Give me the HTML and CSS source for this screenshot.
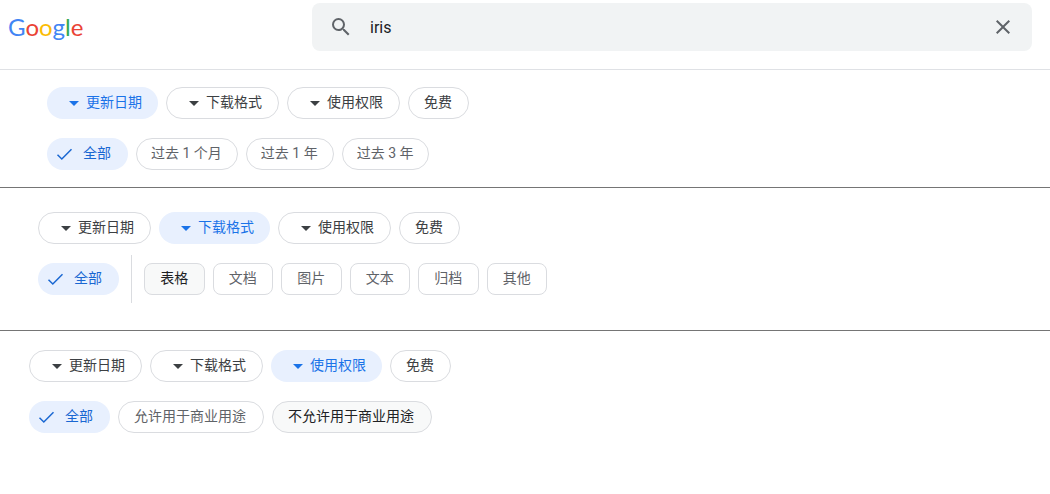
FILE: index.html
```html
<!DOCTYPE html>
<html lang="zh-CN">
<head>
<meta charset="utf-8">
<meta name="viewport" content="width=device-width, initial-scale=1">
<title>iris</title>
<link rel="stylesheet" href="styles.css">
</head>
<body>
<svg class="sprite" aria-hidden="true">
  <symbol id="arrow" viewBox="0 0 24 24"><path d="M7 10l5 5 5-5z"/></symbol>
  <symbol id="check" viewBox="0 0 18 18"><path d="M1.500 9.800l4.300 4.200L15.500 4.300" fill="none" stroke="currentColor" stroke-width="1.500"/></symbol>
</svg>
<header class="header">
  <a class="logo" href="#" aria-label="Google"><span class="blue">G</span><span class="red">o</span><span class="yellow">o</span><span class="blue">g</span><span class="green">l</span><span class="red">e</span></a>
  <form class="search" role="search">
    <button class="icon-button" type="button" aria-label="搜索"><svg viewBox="0 0 24 24"><path d="M15.500 14h-.790l-.280-.270A6.471 6.471 0 0 0 16 9.500 6.500 6.500 0 1 0 9.500 16c1.610 0 3.090-.590 4.230-1.570l.270.280v.790l5 4.990L20.490 19l-4.990-5zm-6 0C7.010 14 5 11.990 5 9.500S7.010 5 9.500 5 14 7.010 14 9.500 11.990 14 9.500 14z"/></svg></button>
    <input class="query" type="text" value="iris" aria-label="搜索数据集">
    <button class="icon-button" type="button" aria-label="清除"><svg viewBox="0 0 24 24"><path d="M19 6.410L17.590 5 12 10.590 6.410 5 5 6.410 10.590 12 5 17.590 6.410 19 12 13.410 17.590 19 19 17.590 13.410 12z"/></svg></button>
  </form>
</header>
<main>
  <section class="panel panel-date">
    <div class="chips">
      <button class="chip menu active"><svg><use href="#arrow"/></svg>更新日期</button>
      <button class="chip menu"><svg><use href="#arrow"/></svg>下载格式</button>
      <button class="chip menu"><svg><use href="#arrow"/></svg>使用权限</button>
      <button class="chip">免费</button>
    </div>
    <div class="chips options">
      <button class="chip all"><svg><use href="#check"/></svg>全部</button>
      <button class="chip option">过去 1 个月</button>
      <button class="chip option">过去 1 年</button>
      <button class="chip option">过去 3 年</button>
    </div>
  </section>
  <section class="panel panel-format">
    <div class="chips">
      <button class="chip menu"><svg><use href="#arrow"/></svg>更新日期</button>
      <button class="chip menu active"><svg><use href="#arrow"/></svg>下载格式</button>
      <button class="chip menu"><svg><use href="#arrow"/></svg>使用权限</button>
      <button class="chip">免费</button>
    </div>
    <div class="chips options">
      <button class="chip all"><svg><use href="#check"/></svg>全部</button>
      <div class="formats">
        <button class="chip option square hovered">表格</button>
        <button class="chip option square">文档</button>
        <button class="chip option square">图片</button>
        <button class="chip option square">文本</button>
        <button class="chip option square">归档</button>
        <button class="chip option square">其他</button>
      </div>
    </div>
  </section>
  <section class="panel panel-rights">
    <div class="chips">
      <button class="chip menu"><svg><use href="#arrow"/></svg>更新日期</button>
      <button class="chip menu"><svg><use href="#arrow"/></svg>下载格式</button>
      <button class="chip menu active"><svg><use href="#arrow"/></svg>使用权限</button>
      <button class="chip">免费</button>
    </div>
    <div class="chips options">
      <button class="chip all"><svg><use href="#check"/></svg>全部</button>
      <button class="chip option">允许用于商业用途</button>
      <button class="chip option hovered">不允许用于商业用途</button>
    </div>
  </section>
</main>
</body>
</html>
```
FILE: styles.css
```css
* { box-sizing: border-box; }
body {
  margin: 0;
  background: #fff;
  color: #3c4043;
  font-family: Roboto, "Noto Sans CJK SC", sans-serif;
  font-size: 14px;
}
button, input { font: inherit; color: inherit; }
.sprite { display: none; }

.header {
  display: grid;
  grid-template-columns: 304px 1fr;
  padding: 3px 18px 18px 8px;
  border-bottom: 1px solid #dfe1e5;
}
.logo {
  align-self: center;
  font: 24px/32px Lato, sans-serif;
  text-decoration: none;
}
.blue { color: #4285f4; }
.red { color: #ea4335; }
.yellow { color: #fbbc05; }
.green { color: #34a853; }

.search {
  display: flex;
  align-items: center;
  height: 48px;
  padding: 0 17px;
  border-radius: 8px;
  background: #f1f3f4;
}
.icon-button {
  width: 24px;
  height: 24px;
  padding: 0;
  border: 0;
  background: none;
  color: #5f6368;
}
.icon-button svg { display: block; width: 24px; height: 24px; fill: currentColor; }
.query {
  flex: 1;
  min-width: 0;
  padding: 0 17px;
  border: 0;
  outline: 0;
  background: none;
  color: #202124;
  font-family: Roboto, sans-serif;
  font-size: 16px;
}

.panel { border-bottom: 1px solid #757575; }
.panel-date { padding: 17px 47px; }
.panel-format { padding: 24px 38px 27px; }
.panel-rights { padding: 19px 29px; border-bottom: 0; }

.chips { display: flex; flex-wrap: wrap; gap: 8px; }
.options { margin-top: 19px; }
.chip {
  display: flex;
  align-items: center;
  height: 32px;
  padding: 0 16px 2px 15px;
  border: 1px solid #dadce0;
  border-radius: 16px;
  background: #fff;
  line-height: 20px;
  white-space: nowrap;
}
.menu svg { width: 24px; height: 24px; margin-top: 2px; fill: currentColor; }
.active { border: 0; background: #e8f0fe; color: #1a73e8; }
.all {
  gap: 9px;
  padding: 0 17px 2px 9px;
  border: 0;
  background: #e8f0fe;
  color: #1967d2;
}
.all svg { width: 18px; height: 18px; margin-top: 2px; }
.option { color: #5f6368; }
.panel-date .option { padding: 0 15px 2px 14px; }
.panel-rights .option { padding: 0 17px 2px 15px; }
.hovered { background: #f8f9f9; color: #202124; }

.panel-format .options { align-items: center; gap: 12px; margin-top: 11px; }
.formats {
  display: grid;
  grid-template-columns: repeat(6, 1fr);
  align-items: center;
  gap: 8px;
  width: 416px;
  min-height: 48px;
  padding-left: 12px;
  border-left: 1px solid #dadce0;
}
.square { justify-content: center; padding: 0 0 2px; border-radius: 8px; }
```
